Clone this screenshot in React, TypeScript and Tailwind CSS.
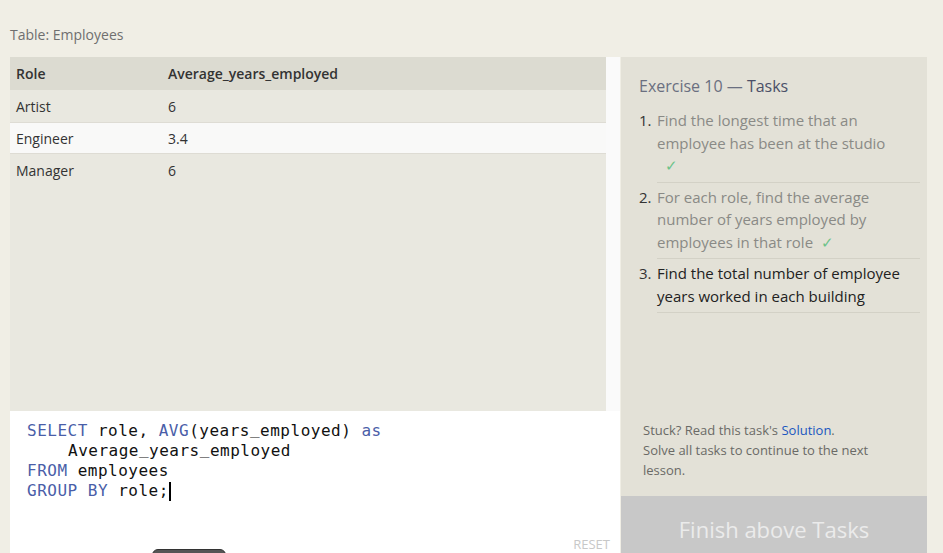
import React from 'react';

const rows = [
  { role: 'Artist', avg: '6' },
  { role: 'Engineer', avg: '3.4' },
  { role: 'Manager', avg: '6' },
];

const tasks = [
  { text: 'Find the longest time that an employee has been at the studio', done: true, checkBreak: true },
  { text: 'For each role, find the average number of years employed by employees in that role', done: true, checkBreak: false },
  { text: 'Find the total number of employee years worked in each building', done: false, checkBreak: false },
];

const Check = ({ className = '' }: { className?: string }) => (
  <span className={`text-[#6cc38a] ${className}`}>✓</span>
);

const kw = 'text-[#4a5ea8]';

const Ident = ({ name }: { name: string }) => (
  <>
    {name.split('_').map((part, i) => (
      <React.Fragment key={i}>
        {i > 0 && <span className="relative top-[-2px]">_</span>}
        {part}
      </React.Fragment>
    ))}
  </>
);

export default function App() {
  return (
    <div className="w-[943px] h-[553px] overflow-hidden bg-[#f0eee5] flex font-['Open_Sans',sans-serif]">
      {/* left: table + editor */}
      <div className="w-[620px] pl-[10px] flex flex-col">
        <div className="h-[57px] flex items-end pb-[12px] text-[14px] text-[#6f6f6f]">Table: Employees</div>
        <div className="h-[354px] flex shrink-0">
          <div className="flex-1 bg-[#e9e8e0] text-[14px] text-[#333]">
            <div className="h-[33px] flex items-center bg-[#dcdbd1] font-semibold">
              <div className="w-[158px] pl-[6px]">Role</div>
              <div>Average_years_employed</div>
            </div>
            {rows.map((r, i) => (
              <div
                key={r.role}
                className={`h-[32px] flex items-center ${i === 1 ? 'bg-[#f9f9f8] border-y border-[#dedcd4]' : ''}`}
              >
                <div className="w-[158px] pl-[6px]">{r.role}</div>
                <div>{r.avg}</div>
              </div>
            ))}
          </div>
          <div className="w-[14px] bg-[#fafafa]" />
        </div>
        <div className="flex-1 bg-white relative pt-[9px] pl-[17px] font-['DejaVu_Sans_Mono',monospace] text-[16px] tracking-[0.5px] leading-[22px] text-[#111]">
          <div className="h-[20px]">
            <span className={kw}>SELECT</span> role, <span className={kw}>AVG</span>(<Ident name="years_employed" />) <span className={kw}>as</span>
          </div>
          <div className="h-[20px] pl-[41px]"><Ident name="Average_years_employed" /></div>
          <div className="h-[20px]">
            <span className={kw}>FROM</span> employees
          </div>
          <div className="h-[20px] flex items-start">
            <span className={kw}>GROUP BY</span>&nbsp;role;
            <span className="inline-block w-[2px] h-[19px] mt-[2px] bg-black" />
          </div>
          <div className="absolute right-[10px] bottom-0 text-[13px] leading-[18px] tracking-normal font-['Open_Sans',sans-serif] text-[#c8c8c8]">RESET</div>
          <div className="absolute left-[142px] bottom-[-10px] w-[74px] h-[14px] rounded-t-[6px] bg-[#555] border border-[#333]" />
        </div>
      </div>

      {/* right: tasks panel */}
      <div className="mt-[57px] ml-[1px] w-[306px] bg-[#e3e1d7] flex flex-col">
        <div className="flex-1 pl-[18px] pr-[7px]">
          <div className="mt-[17px] text-[16px] text-[#6a6f80]">
            Exercise 10 — <span className="text-[#4b5068]">Tasks</span>
          </div>
          <ol className="mt-[11px] text-[15px] leading-[22.5px]">
            {tasks.map((t, i) => (
              <li key={i} className="flex">
                <span className="w-[18px] text-[#333] shrink-0">{i + 1}.</span>
                <div className={`flex-1 pb-[5px] mb-[3px] border-b border-[#d3d1c6] ${t.done ? 'text-[#8a8a86]' : 'text-[#222]'}`}>
                  {t.text}
                  {t.done && (t.checkBreak ? <div><Check className="ml-[8px]" /></div> : <Check className="ml-[8px]" />)}
                </div>
              </li>
            ))}
          </ol>
        </div>
        <div className="pl-[22px] pr-[20px] pb-[16px] text-[13px] leading-[20px] text-[#6a6a66]">
          Stuck? Read this task's <span className="text-[#1a56c0]">Solution</span>.<br />
          Solve all tasks to continue to the next lesson.
        </div>
        <div className="h-[57px] shrink-0 pt-[10px] bg-[#c8c8c8] flex items-center justify-center text-[22px] text-[#ebebeb]">
          Finish above Tasks
        </div>
      </div>
    </div>
  );
}
